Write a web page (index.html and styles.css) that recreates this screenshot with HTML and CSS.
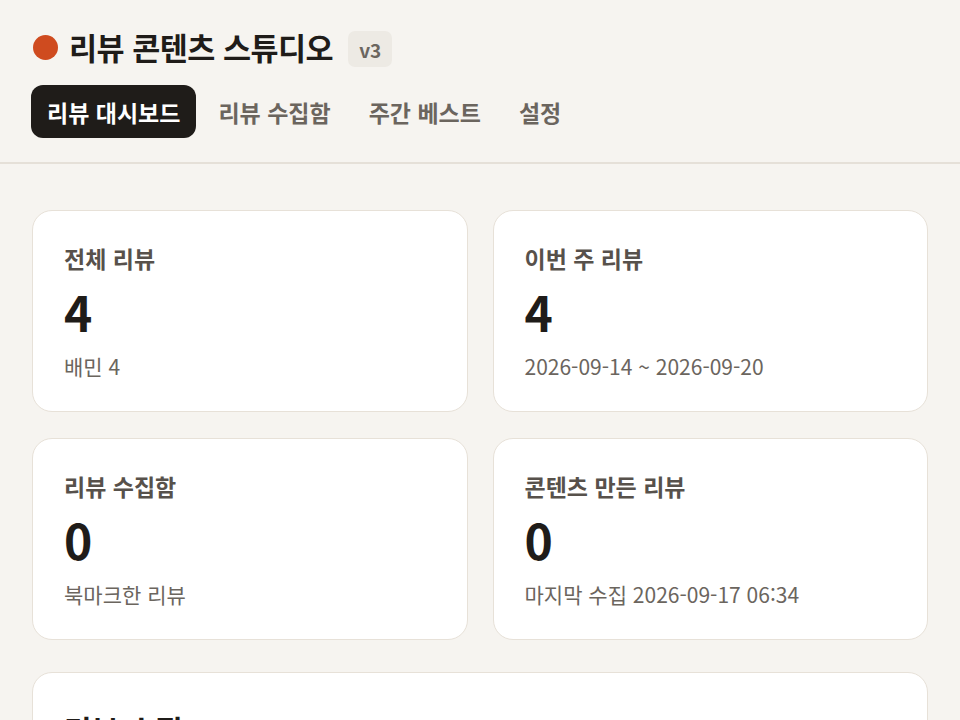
FILE: index.html
```html
<!DOCTYPE html>
<html lang="ko">
<head>
<meta charset="utf-8">
<title>리뷰 콘텐츠 스튜디오</title>
<link rel="stylesheet" href="styles.css">
</head>
<body>
<header class="topbar">
  <div class="brand">
    <span class="brand-dot"></span>
    <h1 class="brand-title">리뷰 콘텐츠 스튜디오</h1>
    <span class="version">v3</span>
  </div>
  <nav class="tabs">
    <a class="tab tab-active">리뷰 대시보드</a>
    <a class="tab">리뷰 수집함</a>
    <a class="tab">주간 베스트</a>
    <a class="tab">설정</a>
  </nav>
</header>
<main class="content">
  <section class="stats">
    <div class="card stat">
      <div class="stat-label">전체 리뷰</div>
      <div class="stat-value">4</div>
      <div class="stat-sub">배민 4</div>
    </div>
    <div class="card stat">
      <div class="stat-label">이번 주 리뷰</div>
      <div class="stat-value">4</div>
      <div class="stat-sub">2026-09-14 ~ 2026-09-20</div>
    </div>
    <div class="card stat">
      <div class="stat-label">리뷰 수집함</div>
      <div class="stat-value">0</div>
      <div class="stat-sub">북마크한 리뷰</div>
    </div>
    <div class="card stat">
      <div class="stat-label">콘텐츠 만든 리뷰</div>
      <div class="stat-value">0</div>
      <div class="stat-sub">마지막 수집 2026-09-17 06:34</div>
    </div>
  </section>
  <section class="card panel">
    <div class="panel-head">
      <h2 class="panel-title">리뷰 수집</h2>
      <span class="panel-desc">배민 리뷰를 불러와 수집함에 저장하고 콘텐츠로 만들어요</span>
    </div>
  </section>
</main>
</body>
</html>
```

FILE: styles.css
```css
* { box-sizing: border-box; }
html, body { margin: 0; padding: 0; }
body {
  background: #f6f4f0;
  color: #1f1c19;
  font-family: "Noto Sans CJK KR", "Noto Sans", sans-serif;
}
.topbar {
  padding: 26px 31px 24px;
  border-bottom: 2px solid #e5e0d8;
}
.brand {
  display: flex;
  align-items: center;
  height: 42px;
}
.brand-dot {
  width: 25px;
  height: 25px;
  border-radius: 50%;
  background: #cf4b1f;
  margin-left: 2px;
  margin-right: 11px;
}
.brand-title {
  margin: 0;
  font-size: 30.5px;
  font-weight: 700;
  letter-spacing: -0.5px;
  line-height: 42px;
  color: #1f1c19;
}
.version {
  margin-left: 15px;
  margin-top: 4px;
  height: 36px;
  padding: 0 11px;
  display: flex;
  align-items: center;
  border-radius: 7px;
  background: #edeae4;
  color: #6b665f;
  font-size: 19px;
  font-weight: 700;
}
.tabs {
  display: flex;
  gap: 6px;
  margin-top: 17px;
}
.tab {
  height: 53px;
  padding: 0 16px;
  display: flex;
  align-items: center;
  border-radius: 12px;
  font-size: 23px;
  font-weight: 700;
  color: #6b655e;
}
.tab-active {
  background: #1f1c19;
  color: #ffffff;
}
.content {
  padding: 46px 32px;
}
.stats {
  display: grid;
  grid-template-columns: 1fr 1fr;
  gap: 26px 25px;
}
.card {
  background: #ffffff;
  border: 1.5px solid #e7e1d8;
  border-radius: 20px;
}
.stat {
  height: 202px;
  padding: 32px 31px;
}
.stat-label {
  font-size: 23px;
  font-weight: 700;
  color: #57514b;
  line-height: 30px;
}
.stat-value {
  font-size: 48px;
  font-weight: 700;
  line-height: 56px;
  margin-top: 10px;
  color: #1f1c19;
}
.stat-sub {
  margin-top: 12px;
  font-size: 21px;
  line-height: 30px;
  color: #6b655e;
}
.panel {
  margin-top: 32px;
  padding: 34px 31px;
  min-height: 200px;
}
.panel-head {
  display: flex;
  align-items: baseline;
  gap: 22px;
}
.panel-title {
  margin: 0;
  font-size: 30px;
  font-weight: 700;
  color: #1f1c19;
}
.panel-desc {
  font-size: 19px;
  color: #6b655e;
}
```
